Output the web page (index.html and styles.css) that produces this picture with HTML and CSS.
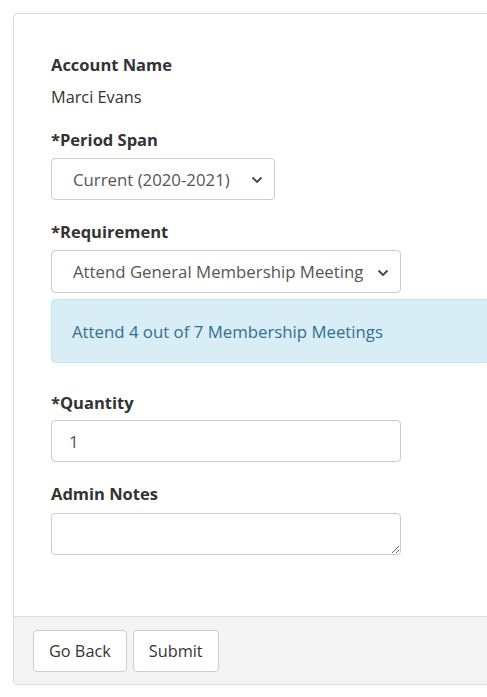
FILE: index.html
```html
<!DOCTYPE html>
<html>
<head>
<meta charset="utf-8">
<link rel="stylesheet" href="styles.css">
</head>
<body>
<div class="page">
  <form class="card">
    <div class="card-body">
      <div class="group">
        <div class="label">Account Name</div>
        <div class="value">Marci Evans</div>
      </div>
      <div class="group g-period">
        <label class="label">*Period Span</label>
        <div class="select-wrap short">
          <select class="select">
            <option>Current (2020-2021)</option>
          </select>
          <svg class="chev" viewBox="0 0 12 8" width="12" height="8"><path d="M1.5 1.5 L6 6 L10.5 1.5" fill="none" stroke="#444" stroke-width="1.8"/></svg>
        </div>
      </div>
      <div class="group tight">
        <label class="label">*Requirement</label>
        <div class="select-wrap wide">
          <select class="select tall">
            <option>Attend General Membership Meetings</option>
          </select>
          <svg class="chev" viewBox="0 0 12 8" width="12" height="8"><path d="M1.5 1.5 L6 6 L10.5 1.5" fill="none" stroke="#444" stroke-width="1.8"/></svg>
        </div>
        <div class="info">Attend 4 out of 7 Membership Meetings</div>
      </div>
      <div class="group g-qty">
        <label class="label">*Quantity</label>
        <input class="input wide" type="text" value="1">
      </div>
      <div class="group last">
        <label class="label">Admin Notes</label>
        <textarea class="input wide textarea"></textarea>
      </div>
    </div>
    <div class="card-footer">
      <button type="button" class="btn">Go Back</button>
      <button type="button" class="btn">Submit</button>
    </div>
  </form>
</div>
</body>
</html>
```

FILE: styles.css
```css
html, body {
  margin: 0;
  padding: 0;
  overflow: hidden;
  background: #fff;
}
body {
  font-family: "Open Sans", "Noto Sans", sans-serif;
  font-size: 16.8px;
  color: #333;
}
.page {
  padding: 13px 0 0 13px;
  width: 560px;
}
.card {
  display: block;
  margin: 0;
  border: 1px solid #ddd;
  border-radius: 4px;
  background: #fff;
}
.card-body {
  padding: 39px 37px 61px 37px;
}
.group {
  margin-bottom: 19px;
}
.group.g-period {
  margin-bottom: 20px;
}
.group.tight {
  margin-bottom: 28px;
}
.group.g-qty {
  margin-bottom: 20px;
}
.group.last {
  margin-bottom: 0;
}
.label {
  display: block;
  font-weight: 700;
  font-size: 16.5px;
  line-height: 24px;
  margin-bottom: 6px;
  color: #333;
}
.g-qty .label {
  margin-bottom: 5px;
}
.last .label {
  margin-bottom: 7px;
}
.value {
  line-height: 24px;
  margin-top: 8px;
  color: #333;
  font-size: 16.3px;
}
.select-wrap {
  position: relative;
}
.select-wrap.short { width: 224px; }
.select, .input {
  box-sizing: border-box;
  display: block;
  margin: 0;
  height: 42px;
  border: 1px solid #ccc;
  border-radius: 4px;
  background: #fff;
  color: #555;
  font-family: inherit;
  font-size: 16.8px;
  outline: none;
}
.select {
  width: 100%;
  -webkit-appearance: none;
  appearance: none;
  padding: 0 37px 0 21px;
}
.select.tall { height: 43px; }
.wide { width: 350px; }
.chev {
  position: absolute;
  right: 12px;
  top: 50%;
  margin-top: -3px;
  pointer-events: none;
}
.input {
  padding: 0 17px;
}
.textarea {
  height: 42px;
  resize: vertical;
  padding: 6px 17px;
}
.info {
  margin-top: 6px;
  height: 64px;
  box-sizing: border-box;
  background: #d9edf7;
  border: 1px solid #bce8f1;
  border-radius: 4px;
  color: #31708f;
  padding: 0 20px;
  display: flex;
  align-items: center;
}
.card-footer {
  background: #f4f4f4;
  border-top: 1px solid #ddd;
  padding: 13px 19px 12px 19px;
  display: flex;
  gap: 6px;
  border-radius: 0 0 4px 4px;
}
.btn {
  font-family: inherit;
  font-size: 16.3px;
  color: #333;
  height: 42px;
  padding: 0 15px;
  margin: 0;
  background: #fff;
  border: 1px solid #ccc;
  border-radius: 4px;
}
```
